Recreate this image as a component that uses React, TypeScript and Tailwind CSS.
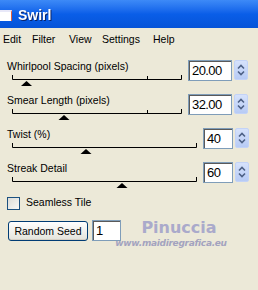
import React from 'react';

const font = { fontFamily: '"Liberation Sans", Arial, sans-serif' };

function Spinner() {
  return (
    <div className="w-[14px] h-[20px] ml-[2px] rounded-[2px] bg-gradient-to-b from-[#d6e2fb] to-[#b7cbf5] border border-[#c3d3f7] flex items-center justify-center">
      <svg width="8" height="12" viewBox="0 0 8 12">
        <path d="M1 4.5 L4 1.5 L7 4.5" fill="none" stroke="#4d6185" strokeWidth="1.6" />
        <path d="M1 7.5 L4 10.5 L7 7.5" fill="none" stroke="#4d6185" strokeWidth="1.6" />
      </svg>
    </div>
  );
}

function SpinBox({ value, wide }: { value: string; wide: boolean }) {
  return (
    <div className="flex items-start">
      <div
        className={`${wide ? 'w-[44px]' : 'w-[30px]'} h-[21px] bg-white border border-[#7f9db9] shadow-[inset_1px_1px_0_#5a5a5a] pl-[3px] text-[13px] tracking-[-0.6px] leading-[19px] text-black whitespace-nowrap`}
      >
        {value}
      </div>
      <Spinner />
    </div>
  );
}

function Slider({ end, thumb, mid }: { end: number; thumb: number; mid?: number }) {
  return (
    <svg width="200" height="16" viewBox="0 0 200 16" className="block">
      <path d={`M12.5 3 V7.5 H${end + 0.5} V3`} fill="none" stroke="#000" strokeWidth="1" />
      {mid ? <path d={`M${mid + 0.5} 4 V7.5`} stroke="#000" strokeWidth="1" /> : null}
      <polygon points={`${thumb - 5.5},14 ${thumb + 5.5},14 ${thumb},9`} fill="#000" />
    </svg>
  );
}

const rows = [
  { label: 'Whirlpool Spacing (pixels)', value: '20.00', wide: true, end: 181, thumb: 26.5, mid: 147, gap: 'ml-[-12px]' },
  { label: 'Smear Length (pixels)', value: '32.00', wide: true, end: 181, thumb: 64, mid: 147, gap: 'ml-[-12px]' },
  { label: 'Twist (%)', value: '40', wide: false, end: 196, thumb: 86, gap: 'ml-[3px]' },
  { label: 'Streak Detail', value: '60', wide: false, end: 196, thumb: 122, gap: 'ml-[3px]' },
];

export default function App() {
  return (
    <div className="w-[258px] h-[290px] bg-[#ece9d8] overflow-hidden relative text-black" style={font}>
      <div className="h-[28px] bg-gradient-to-b from-[#3d8af7] via-[#0a5ee8] to-[#0553d8] flex items-center">
        <div className="w-[12px] h-[11px] bg-white border-t-2 border-r border-t-[#e8e8f8] border-r-[#e06040] mt-[2px]" />
        <span className="ml-[6px] text-white font-bold text-[14px] mt-[2px] drop-shadow-[1px_1px_0_#0a246a]">Swirl</span>
      </div>
      <div className="h-[20px] flex items-center pl-[3px] text-[10.5px] pt-[3px]">
        <span className="w-[29px]">Edit</span>
        <span className="w-[37px]">Filter</span>
        <span className="w-[33px]">View</span>
        <span className="w-[51px]">Settings</span>
        <span>Help</span>
      </div>
      <div className="pt-[10px]">
        {rows.map((r) => (
          <div key={r.label} className="h-[34px] flex items-start">
            <div className="w-[200px]">
              <div className="pl-[7px] pt-[2px] text-[10.5px] leading-[12px] h-[14px]">{r.label}</div>
              <Slider end={r.end} thumb={r.thumb} mid={r.mid} />
            </div>
            <div className={`mt-[2px] ${r.gap}`}>
              <SpinBox value={r.value} wide={r.wide} />
            </div>
          </div>
        ))}
      </div>
      <div className="flex items-center pl-[7px] mt-[2px] h-[14px]">
        <div className="w-[13px] h-[13px] border border-[#1c5180] bg-gradient-to-br from-[#dcdcd7] to-[#f8f8f6]" />
        <span className="ml-[6px] text-[10.5px]">Seamless Tile</span>
      </div>
      <div className="flex items-start pl-[8px] mt-[11px]">
        <button className="w-[80px] h-[20px] rounded-[3px] border border-[#003c74] bg-gradient-to-b from-[#ffffff] to-[#e3e3db] text-[10.5px] leading-[18px] shadow-[inset_0_-1px_0_#d6d0c5]">
          Random Seed
        </button>
        <div className="ml-[4px] mt-[-1px] w-[29px] h-[21px] bg-white border border-[#7f9db9] shadow-[inset_1px_1px_0_#5a5a5a] pl-[3px] text-[13px] leading-[19px]">
          1
        </div>
      </div>
      <div className="absolute left-[115px] top-[219px] w-[112px] flex flex-col items-center pointer-events-none" style={{ fontFamily: '"DejaVu Sans", sans-serif' }}>
        <span className="text-[16px] leading-[18px] font-semibold text-[#aaaacb] ml-[16px]">Pinuccia</span>
        <span className="text-[9px] leading-[10px] italic font-semibold text-[#a3a3bf] tracking-[-0.3px] mt-[1px]">www.maidiregrafica.eu</span>
      </div>
    </div>
  );
}
